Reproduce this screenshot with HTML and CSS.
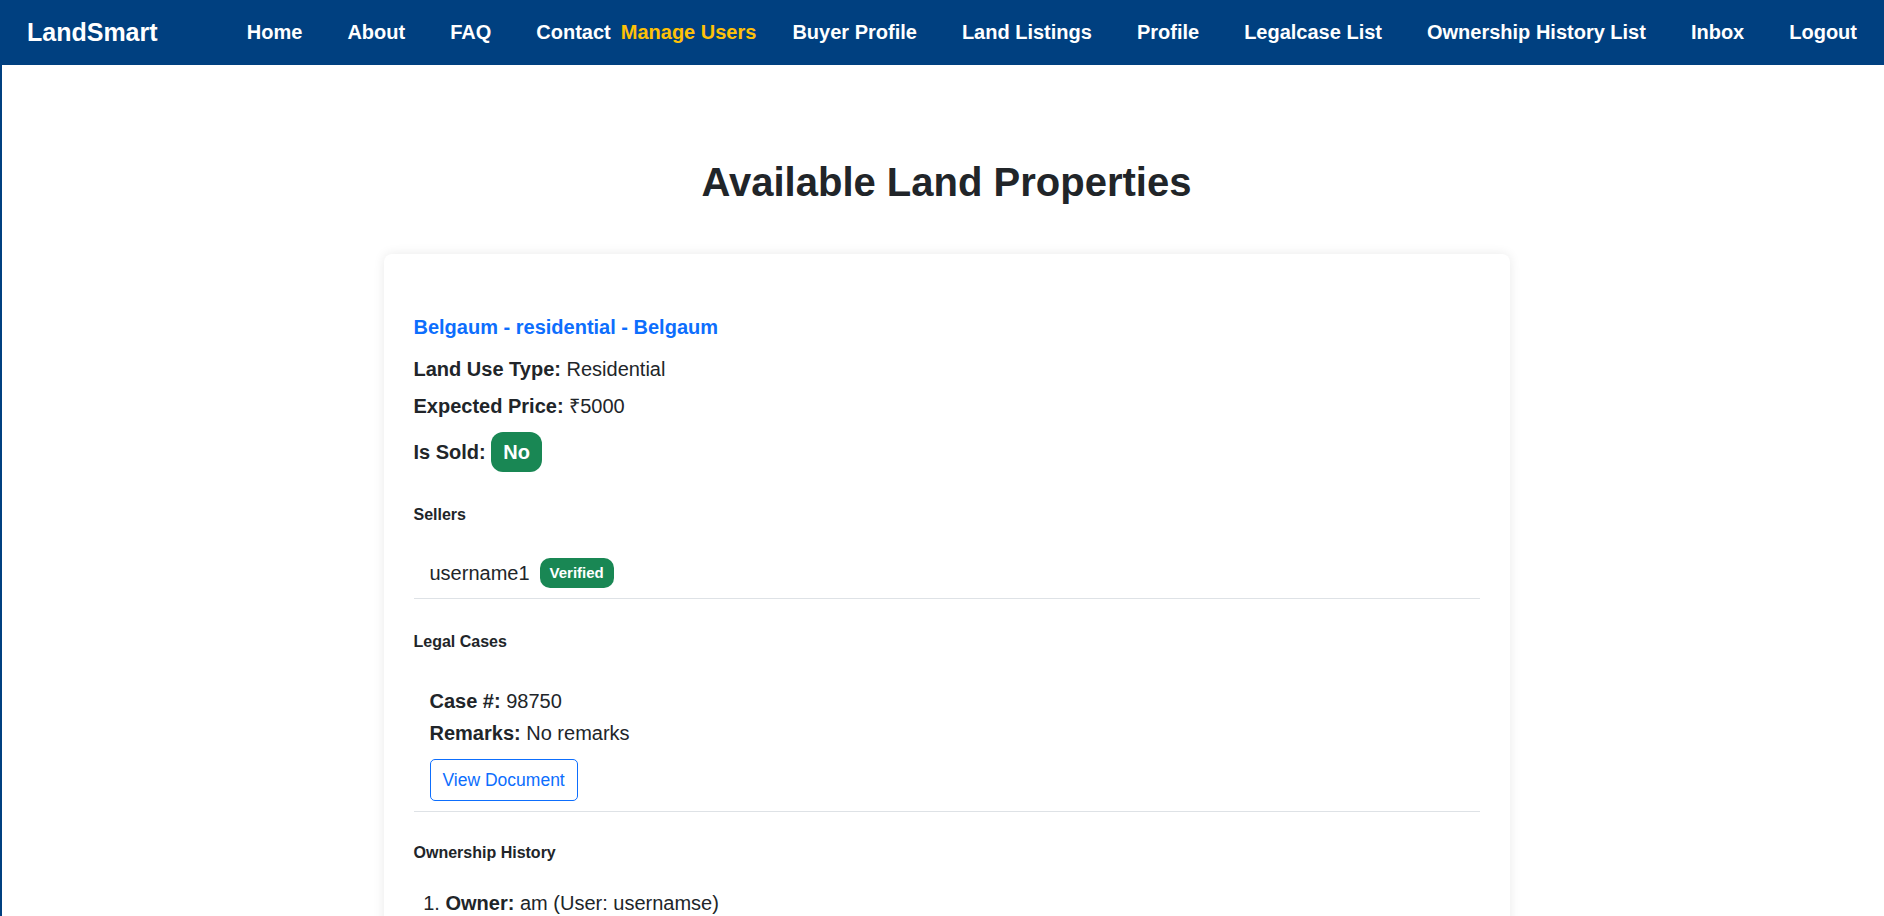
FILE: index.html
```html
<!DOCTYPE html>
<html lang="en">
<head>
<meta charset="utf-8">
<title>LandSmart - Available Land Properties</title>
<link rel="stylesheet" href="styles.css">
</head>
<body>
<nav class="navbar">
  <a class="brand" href="#">LandSmart</a>
  <ul class="nav-links">
    <li><a href="#">Home</a></li>
    <li><a href="#">About</a></li>
    <li><a href="#">FAQ</a></li>
    <li class="nav-pair"><a href="#">Contact</a><a class="admin-link" href="#">Manage Users</a></li>
    <li><a href="#">Buyer Profile</a></li>
    <li><a href="#">Land Listings</a></li>
    <li><a href="#">Profile</a></li>
    <li><a href="#">Legalcase List</a></li>
    <li><a href="#">Ownership History List</a></li>
    <li><a href="#">Inbox</a></li>
    <li><a href="#">Logout</a></li>
  </ul>
</nav>
<main class="page">
  <div class="container">
    <h1 class="page-title">Available Land Properties</h1>
    <div class="card">
      <h5 class="land-title">Belgaum - residential - Belgaum</h5>
      <p class="detail"><strong>Land Use Type:</strong> Residential</p>
      <p class="detail"><strong>Expected Price:</strong> ₹5000</p>
      <p class="detail sold"><strong>Is Sold:</strong> <span class="badge-lg">No</span></p>

      <h6 class="section-label">Sellers</h6>
      <ul class="list">
        <li class="list-item seller"><span>username1</span><span class="badge-sm">Verified</span></li>
      </ul>

      <h6 class="section-label">Legal Cases</h6>
      <ul class="list">
        <li class="list-item case">
          <div class="case-line"><strong>Case #:</strong> 98750</div>
          <div class="case-line"><strong>Remarks:</strong> No remarks</div>
          <a class="btn-outline" href="#">View Document</a>
        </li>
      </ul>

      <h6 class="section-label history-label">Ownership History</h6>
      <ol class="history">
        <li><strong>Owner:</strong> am (User: usernamse)</li>
      </ol>
    </div>
  </div>
</main>
</body>
</html>
```
FILE: styles.css
```css
* {
  box-sizing: border-box;
}

html, body {
  margin: 0;
  padding: 0;
}

body {
  font-family: "Liberation Sans", Arial, sans-serif;
  color: #212529;
  background: #ffffff;
}

.navbar {
  height: 65px;
  background: #004080;
  display: flex;
  align-items: center;
  justify-content: space-between;
  padding: 0 27px;
}

.brand {
  color: #ffffff;
  font-weight: bold;
  font-size: 25px;
  text-decoration: none;
}

.nav-links {
  list-style: none;
  margin: 0;
  padding: 0;
  display: flex;
  align-items: center;
  gap: 45px;
}

.nav-links a {
  color: #ffffff;
  font-weight: bold;
  font-size: 20px;
  text-decoration: none;
}

.nav-pair {
  display: flex;
  gap: 10px;
  margin-right: -9px;
}

.nav-links .admin-link {
  color: #ffc107;
}

.page {
  display: flow-root;
  border-left: 2px solid #004080;
  padding-left: 7px;
  min-height: calc(100vh - 65px);
}

.container {
  max-width: 1126px;
  margin: 0 auto;
}

.page-title {
  margin: 93px 0 48px;
  font-size: 40px;
  line-height: 48px;
  font-weight: bold;
  text-align: center;
}

.card {
  background: #ffffff;
  border-radius: 8px;
  box-shadow: 0 0 12px rgba(0, 0, 0, 0.09);
  padding: 61px 30px 30px;
}

.land-title {
  margin: 0 0 15px;
  font-size: 20px;
  line-height: 24px;
  font-weight: bold;
  color: #0d6efd;
}

.detail {
  margin: 0 0 7px;
  font-size: 20px;
  line-height: 30px;
}

.detail.sold {
  margin-top: 11px;
  margin-bottom: 0;
}

.badge-lg {
  display: inline-block;
  background: #198754;
  color: #ffffff;
  font-weight: bold;
  font-size: 20px;
  line-height: 20px;
  padding: 10px 12px;
  border-radius: 12px;
}

.section-label {
  margin: 33px 0 24px;
  font-size: 16px;
  line-height: 19.2px;
  font-weight: bold;
}

.history-label {
  margin-top: 31px;
}

.list {
  list-style: none;
  margin: 0;
  padding: 0;
}

.list-item {
  padding: 10px 16px;
  border-bottom: 1px solid #dee2e6;
  font-size: 20px;
}

.seller {
  display: flex;
  align-items: center;
  gap: 10px;
  line-height: 30px;
}

.badge-sm {
  display: inline-block;
  background: #198754;
  color: #ffffff;
  font-weight: bold;
  font-size: 15px;
  line-height: 16px;
  padding: 7px 10px;
  border-radius: 10px;
}

.case-line {
  line-height: 32px;
}

.btn-outline {
  display: inline-block;
  margin-top: 10px;
  padding: 10px 12px;
  border: 1px solid #0d6efd;
  border-radius: 5px;
  color: #0d6efd;
  font-size: 17.5px;
  line-height: 20px;
  text-decoration: none;
}

.history {
  margin: 25px 0 0;
  padding-left: 32px;
  font-size: 20px;
  line-height: 30px;
}
```
